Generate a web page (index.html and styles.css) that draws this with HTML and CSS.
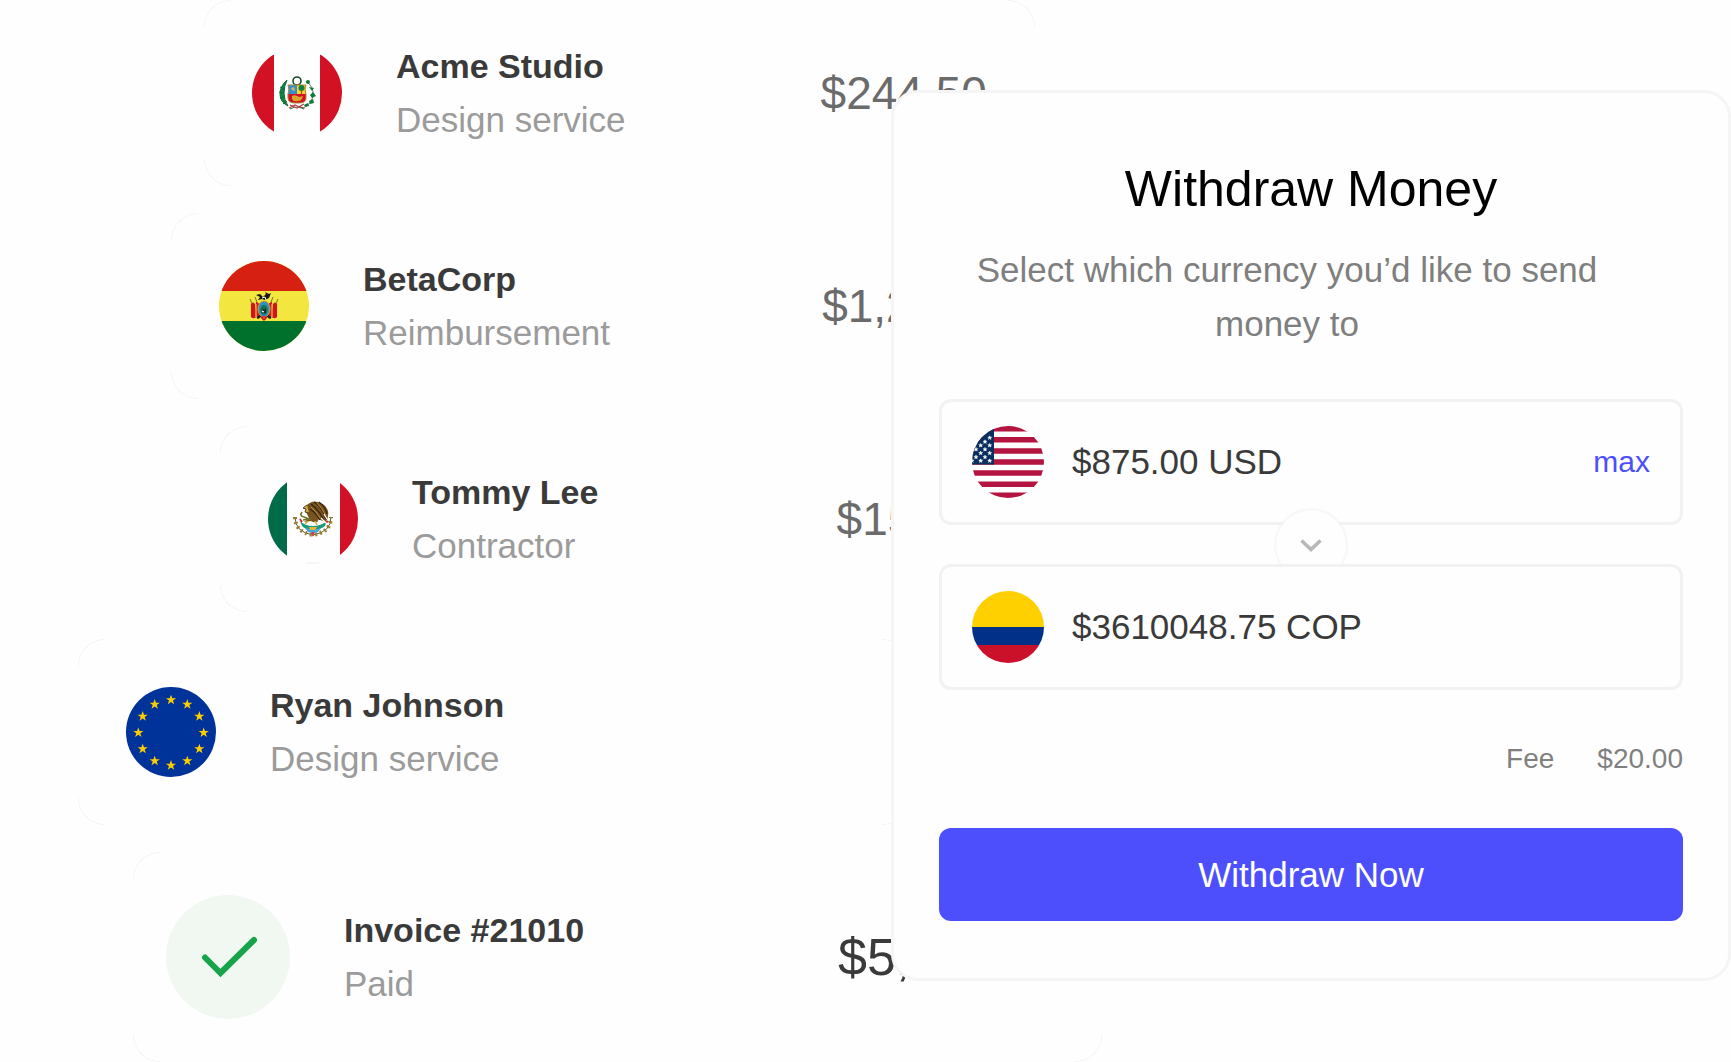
FILE: index.html
```
<!DOCTYPE html>
<html lang="en">
    <head>
        <meta charset="utf-8">
        <title>Withdraw Money</title>
        <link rel="stylesheet" href="styles.css">
    </head>
    <body>
        <main class="page">
            <ul class="payments">
                <li class="payment payment-acme">
                    <svg class="flag" viewBox="0 0 90 90" aria-hidden="true">
                        <rect width="90" height="90" fill="#fefefe"/>
                        <rect width="22" height="90" fill="#d21125"/>
                        <rect x="68" width="22" height="90" fill="#d21125"/>
                        <!-- laurel and palm -->
                        <path d="M35 32q-7 6-7 14t8 12q-4-6-4-13t3-13z" fill="#0b8a43" stroke="#17663a" stroke-width="1"/>
                        <path d="M28 39l4 2M27 44l5 1M28 50l5-1M31 56l4-3" stroke="#17663a" stroke-width="1"/>
                        <path d="M54 33q8 6 7 14t-8 12" fill="none" stroke="#56806a" stroke-width="1"/>
                        <g fill="#0b7a3b">
                            <circle cx="56" cy="34" r="2"/>
                            <path d="M57 39l5 1-2 3zM58 47l3-3 3 4-4 2zM57 53l4-2 1 4-4 1zM52 57l4-2 1 3-4 1z"/>
                        </g>
                        <circle cx="45" cy="33" r="4" fill="#fff" stroke="#17492f" stroke-width="1.6"/>
                        <!-- shield -->
                        <path d="M36 37h9v9h-9q1-4 0-9z" fill="#3290cf"/>
                        <path d="M45 37h9q-1 5 0 9h-9z" fill="#ffd21f"/>
                        <path d="M36 46h18v4q0 5-7 5h-4q-7 0-7-5z" fill="#d21125"/>
                        <path d="M36 37h18q-2 4 0 9v4q0 5-7 5h-4q-7 0-7-5v-4q2-5 0-9z" fill="none" stroke="#a98930" stroke-width="1"/>
                        <path d="M39 40l3-1 1 4-3-1z" fill="#d8b46a"/>
                        <circle cx="49.5" cy="40" r="3" fill="#128243"/>
                        <path d="M49.5 42v4" stroke="#7a5a22" stroke-width="1.2"/>
                        <path d="M40 48q3-2 7 1l4-1q-1 5-5 5-5 1-6-2z" fill="#d9a52b"/>
                        <path d="M37 60l6-3 4 2 6 1M38 57l7 3 7-4" fill="none" stroke="#b83b45" stroke-width="1.2"/>
                        <path d="M38 61l5-2M47 59l5 2" stroke="#28703f" stroke-width="1"/>
                    </svg>
                    <div class="details">
                        <h2>Acme Studio</h2>
                        <p>Design service</p>
                    </div>
                    <span class="amount">$244.50</span>
                </li>
                <li class="payment payment-beta">
                    <svg class="flag" viewBox="0 0 90 90" aria-hidden="true">
                        <rect width="90" height="90" fill="#f2e63f"/>
                        <rect width="90" height="30" fill="#d62112"/>
                        <rect y="60" width="90" height="30" fill="#00712c"/>
                        <!-- flags and rifles round the shield -->
                        <path d="M31 38l9 20M36 36l7 18M59 38l-9 20M54 36l-7 18" stroke="#8b6a2a" stroke-width="1"/>
                        <path d="M32 43q2-3 4 0l2 12q-3 4-6 1zM58 43q-2-3-4 0l-2 12q3 4 6 1z" fill="#d21125"/>
                        <path d="M37 41l4 2v13l-4-2zM53 41l-4 2v13l4-2z" fill="#d21125"/>
                        <path d="M37 43v13M53 43v13" stroke="#f2c52f" stroke-width="1.2"/>
                        <path d="M38 57l5-3M52 57l-5-3" stroke="#20202a" stroke-width="2.4"/>
                        <ellipse cx="45" cy="48" rx="6" ry="8" fill="#2f8fc6" stroke="#d7a526" stroke-width="1"/>
                        <ellipse cx="45" cy="49" rx="3.6" ry="5" fill="#17734a"/>
                        <path d="M43 47l2 2 2-2v5h-3z" fill="#1b2735"/>
                        <path d="M43 50l2 1" stroke="#fff" stroke-width="1.2"/>
                        <path d="M42 56l3 3 3-3M44 55v4M46 55v4" stroke="#d21125" stroke-width="1.4" fill="none"/>
                        <!-- condor -->
                        <path d="M37 34l4-1 3 3 3-3-1-2 4 2 2-1-2 5-4 2-3-1-4 1 2-3z" fill="#15151a"/>
                        <path d="M43 37l3-1 1 3" stroke="#fff" stroke-width="1" fill="none"/>
                    </svg>
                    <div class="details">
                        <h2>BetaCorp</h2>
                        <p>Reimbursement</p>
                    </div>
                    <span class="amount">$1,200</span>
                </li>
                <li class="payment payment-tommy">
                    <svg class="flag" viewBox="0 0 90 90" aria-hidden="true">
                        <rect width="90" height="90" fill="#fefefe"/>
                        <rect width="19" height="90" fill="#006b49"/>
                        <rect x="72" width="18" height="90" fill="#d21127"/>
                        <path d="M38 89h15" stroke="#ececec" stroke-width="1"/>
                        <!-- oak and laurel wreath -->
                        <path d="M27 43q0 15 18 18 18-3 18-18" fill="none" stroke="#55612f" stroke-width="1"/>
                        <path d="M27 43q0 15 18 18 18-3 18-18" fill="none" stroke="#9c7a2e" stroke-width="4" stroke-dasharray="2 3"/>
                        <!-- lake and cactus -->
                        <path d="M32 47q5 5 13 5t14-5l-2 5q-5 4-12 4t-11-4z" fill="#1d9a7c"/>
                        <path d="M37 54q8 3 16 0l-3 4q-5 2-10 0z" fill="#46a6dc"/>
                        <path d="M41 53h8l-2 3h-5z" fill="#e0b63a"/>
                        <path d="M32 45l2 3M58 49l2-2" stroke="#d21127" stroke-width="1.6"/>
                        <path d="M44 58l1 4M46 58l-1 4" stroke="#c8404b" stroke-width="1.4"/>
                        <!-- eagle -->
                        <path d="M39 31q5-5 11-3 8 2 10 9 1 6-2 11l-6-2q-5 4-9 1l-7 1 5-4-2-4q-2-3 0-9z" fill="#79531f"/>
                        <path d="M46 28q8 5 12 17M43 30q8 6 13 16M42 35q6 4 10 11M51 28q6 4 8 12" fill="none" stroke="#32230f" stroke-width="1.2"/>
                        <path d="M43 33q5 4 9 11M49 29q5 5 9 13" fill="none" stroke="#b98c3c" stroke-width="1"/>
                        <path d="M39 31l-4 3 3 1-1 3 4 1" fill="#d5ab4b" stroke="#55401d" stroke-width="1"/>
                        <path d="M34 38q-3 4 2 5l5 2-6 1" fill="none" stroke="#70762b" stroke-width="1.6"/>
                        <path d="M53 44l6 6M50 46l5 3M56 40l3 5" stroke="#fff" stroke-width="1.2"/>
                        <path d="M40 47l-3 3M47 47l2 4" stroke="#d8ab34" stroke-width="1.6"/>
                    </svg>
                    <div class="details">
                        <h2>Tommy Lee</h2>
                        <p>Contractor</p>
                    </div>
                    <span class="amount">$150.00</span>
                </li>
                <li class="payment payment-ryan">
                    <svg class="flag" viewBox="0 0 90 90" aria-hidden="true">
                        <defs>
                            <path id="star" d="M0-5.300L1.300-1.700H5.100L2 .6 3.200 4.300 0 2-3.200 4.300-2 .6-5.100-1.700H-1.300z" fill="#fc0"/>
                        </defs>
                        <rect width="90" height="90" fill="#039"/>
                        <use href="#star" x="45" y="13"/>
                        <use href="#star" x="61.3" y="17.4"/>
                        <use href="#star" x="73.3" y="29.4"/>
                        <use href="#star" x="77.7" y="45.7"/>
                        <use href="#star" x="73.3" y="62"/>
                        <use href="#star" x="61.3" y="74"/>
                        <use href="#star" x="45" y="78.4"/>
                        <use href="#star" x="28.7" y="74"/>
                        <use href="#star" x="16.7" y="62"/>
                        <use href="#star" x="12.3" y="45.7"/>
                        <use href="#star" x="16.7" y="29.4"/>
                        <use href="#star" x="28.7" y="17.4"/>
                    </svg>
                    <div class="details">
                        <h2>Ryan Johnson</h2>
                        <p>Design service</p>
                    </div>
                </li>
                <li class="payment payment-invoice">
                    <svg class="check" viewBox="0 0 124 124" aria-hidden="true">
                        <circle cx="62" cy="62" r="62" fill="#f1f8f1"/>
                        <path d="M39 62.500L54.500 78 88 45" fill="none" stroke="#17a34a" stroke-width="6" stroke-linecap="round"/>
                    </svg>
                    <div class="details">
                        <h2>Invoice #21010</h2>
                        <p>Paid</p>
                    </div>
                    <span class="amount">$5,250.00</span>
                </li>
            </ul>

            <form class="withdraw">
                <h1>Withdraw Money</h1>
                <p class="subtitle">Select which currency you’d like to send money to</p>
                <div class="field">
                    <svg class="field-flag" viewBox="0 0 72 72" aria-hidden="true">
                        <defs>
                            <path id="dot" d="M0-1.900L.6-.6H1.900L.9.4 1.300 1.700 0 .9-1.300 1.700-.9.4-1.900-.6H-.6z" fill="#fff" stroke="#fff" stroke-width=".5"/>
                        </defs>
                        <rect width="72" height="72" fill="#fefefe"/>
                        <path d="M0 2.800h72M0 13.800h72M0 24.900h72M0 36h72M0 47.100h72M0 58.200h72M0 69.200h72" stroke="#b31540" stroke-width="5.540"/>
                        <rect width="22" height="38.500" fill="#0a2f5f"/>
                        <use href="#dot" x="17.700" y="11.700"/>
                        <use href="#dot" x="17.700" y="19.300"/>
                        <use href="#dot" x="17.700" y="27"/>
                        <use href="#dot" x="17.700" y="34.700"/>
                        <use href="#dot" x="13" y="15.700"/>
                        <use href="#dot" x="13" y="23.300"/>
                        <use href="#dot" x="13" y="31"/>
                        <use href="#dot" x="8.700" y="19.300"/>
                        <use href="#dot" x="8.700" y="27"/>
                        <use href="#dot" x="8.700" y="34.700"/>
                        <use href="#dot" x="4" y="23.300"/>
                        <use href="#dot" x="4" y="31"/>
                        <use href="#dot" x="0" y="34.700"/>
                    </svg>
                    <input type="text" value="$875.00 USD" aria-label="You send">
                    <button type="button" class="max">max</button>
                </div>
                <div class="switch">
                    <button type="button" class="switch-button" aria-label="Choose currency">
                        <svg viewBox="0 0 22 14" aria-hidden="true">
                            <path d="M1.500 2.500l9.500 9 9.500-9" fill="none" stroke="#b8b8b8" stroke-width="3.500"/>
                        </svg>
                    </button>
                </div>
                <div class="field">
                    <svg class="field-flag" viewBox="0 0 72 72" aria-hidden="true">
                        <rect width="72" height="36" fill="#ffd000"/>
                        <rect y="36" width="72" height="18" fill="#003087"/>
                        <rect y="54" width="72" height="18" fill="#cb1029"/>
                    </svg>
                    <input type="text" value="$3610048.75 COP" aria-label="They receive">
                </div>
                <div class="fee">
                    <span>Fee</span>
                    <span>$20.00</span>
                </div>
                <button type="submit" class="submit">Withdraw Now</button>
            </form>
        </main>
    </body>
</html>
```
FILE: styles.css
```
* {
    box-sizing: border-box;
    margin: 0;
}

body {
    background-color: #fefefe;
    font-family: "Liberation Sans", Arial, sans-serif;
    color: #3a3a3a;
}

button, input {
    padding: 0;
    border: none;
    background: none;
    font-family: inherit;
    color: inherit;
}

/* list and form share one cell, the form lies on top */
.page {
    display: grid;
    grid-template-columns: minmax(0, 1fr);
}

.payments {
    grid-area: 1 / 1;
    display: flex;
    flex-direction: column;
    gap: 27px;
    padding: 0;
    list-style: none;
}

/* only the rounded corners of a payment are outlined */
.payment {
    display: flex;
    align-items: center;
    gap: 54px;
    width: 48%;
    height: 186px;
    padding: 0 48px;
    background-image:
        radial-gradient(circle at 100% 100%, transparent 26px, #f5f5f5 26px, #f5f5f5 27px, transparent 27px),
        radial-gradient(circle at 0 100%, transparent 26px, #f5f5f5 26px, #f5f5f5 27px, transparent 27px),
        radial-gradient(circle at 100% 0, transparent 26px, #f5f5f5 26px, #f5f5f5 27px, transparent 27px),
        radial-gradient(circle at 0 0, transparent 26px, #f5f5f5 26px, #f5f5f5 27px, transparent 27px);
    background-position: left top, right top, left bottom, right bottom;
    background-size: 27px 27px;
    background-repeat: no-repeat;
}

.payment-acme {
    margin-left: 204px;
}

.payment-beta {
    margin-left: 171px;
    padding-right: 39px;
}

.payment-tommy {
    margin-left: 220px;
}

.payment-ryan {
    margin-left: 78px;
}

.payment-invoice {
    width: 56%;
    height: 210px;
    margin-left: 133px;
    padding: 0 33px;
}

.flag {
    flex: none;
    width: 90px;
    height: 90px;
    border-radius: 50%;
}

.check {
    flex: none;
    width: 124px;
    height: 124px;
}

.details {
    line-height: 54px;
    white-space: nowrap;
}

.details h2 {
    font-size: 34px;
    font-weight: bold;
}

.details p {
    font-size: 35px;
    color: #9b9b9b;
}

.amount {
    margin-left: auto;
    font-size: 46px;
    color: #6b6b6b;
}

.payment-invoice .amount {
    font-size: 52px;
    color: #3a3a3a;
}

.withdraw {
    grid-area: 1 / 1;
    align-self: start;
    justify-self: end;
    z-index: 1;
    width: 49%;
    max-width: 840px;
    margin-top: 90px;
    padding: 66px 45px 57px;
    border: 3px solid #f5f5f5;
    border-radius: 27px;
    background-color: #fefefe;
}

.withdraw h1 {
    margin-bottom: 24px;
    font-size: 50px;
    font-weight: normal;
    line-height: 60px;
    text-align: center;
    color: #000;
}

.subtitle {
    margin-bottom: 48px;
    padding-right: 48px;
    font-size: 35px;
    line-height: 54px;
    text-align: center;
    color: #7f7f7f;
}

.field {
    display: flex;
    align-items: center;
    gap: 28px;
    height: 126px;
    padding: 0 30px;
    border: 3px solid #f2f2f2;
    border-radius: 12px;
}

/* the lower field covers the bottom of the round button */
.switch + .field {
    position: relative;
    z-index: 2;
    background-color: #fefefe;
}

.field-flag {
    flex: none;
    width: 72px;
    height: 72px;
    border-radius: 50%;
}

.field input {
    flex: 1;
    min-width: 0;
    height: 54px;
    font-size: 35px;
}

.max {
    font-size: 30px;
    color: #4c4ffb;
}

.switch {
    display: flex;
    align-items: center;
    justify-content: center;
    height: 39px;
}

.switch-button {
    z-index: 1;
    flex: none;
    display: flex;
    align-items: center;
    justify-content: center;
    width: 70px;
    height: 70px;
    border-radius: 50%;
    background-color: #fefefe;
    box-shadow: 0 0 3px 1px #f0f0f0;
}

.switch-button svg {
    width: 22px;
    height: 14px;
}

.fee {
    display: flex;
    justify-content: flex-end;
    gap: 43px;
    margin: 51px 0;
    font-size: 28px;
    line-height: 36px;
    color: #808080;
}

.submit {
    display: block;
    width: 100%;
    height: 93px;
    border-radius: 12px;
    background-color: #4c4ffb;
    font-size: 35px;
    color: #fff;
}
```
